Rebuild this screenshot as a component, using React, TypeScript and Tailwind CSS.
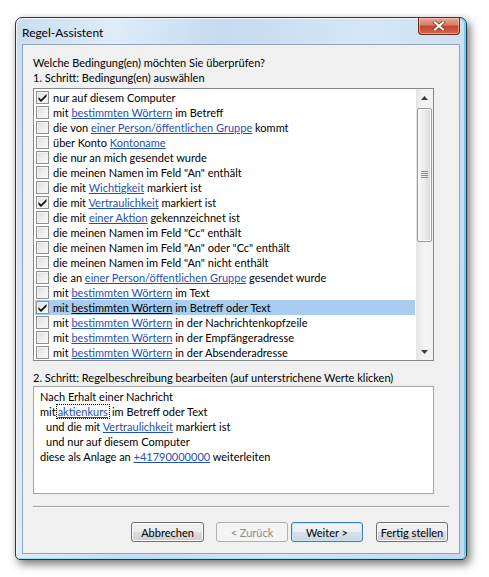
import React from 'react';

type Part = { t: string; link?: boolean };

interface Row {
  parts: Part[];
  checked?: boolean;
  selected?: boolean;
}

const L = (t: string): Part => ({ t, link: true });
const T = (t: string): Part => ({ t });

const rows: Row[] = [
  { parts: [T('nur auf diesem Computer')], checked: true },
  { parts: [T('mit '), L('bestimmten Wörtern'), T(' im Betreff')] },
  { parts: [T('die von '), L('einer Person/öffentlichen Gruppe'), T(' kommt')] },
  { parts: [T('über Konto '), L('Kontoname')] },
  { parts: [T('die nur an mich gesendet wurde')] },
  { parts: [T('die meinen Namen im Feld "An" enthält')] },
  { parts: [T('die mit '), L('Wichtigkeit'), T(' markiert ist')] },
  { parts: [T('die mit '), L('Vertraulichkeit'), T(' markiert ist')], checked: true },
  { parts: [T('die mit '), L('einer Aktion'), T(' gekennzeichnet ist')] },
  { parts: [T('die meinen Namen im Feld "Cc" enthält')] },
  { parts: [T('die meinen Namen im Feld "An" oder "Cc" enthält')] },
  { parts: [T('die meinen Namen im Feld "An" nicht enthält')] },
  { parts: [T('die an '), L('einer Person/öffentlichen Gruppe'), T(' gesendet wurde')] },
  { parts: [T('mit '), L('bestimmten Wörtern'), T(' im Text')] },
  { parts: [T('mit '), L('bestimmten Wörtern'), T(' im Betreff oder Text')], checked: true, selected: true },
  { parts: [T('mit '), L('bestimmten Wörtern'), T(' in der Nachrichtenkopfzeile')] },
  { parts: [T('mit '), L('bestimmten Wörtern'), T(' in der Empfängeradresse')] },
  { parts: [T('mit '), L('bestimmten Wörtern'), T(' in der Absenderadresse')] },
];

const CheckBox: React.FC<{ checked?: boolean }> = ({ checked }) => (
  <span className="w-[13px] h-[13px] shrink-0 border border-[#8e8f8f] bg-[linear-gradient(135deg,#dedede,#fbfbfb)] shadow-[inset_0_0_0_1px_#f4f4f4] flex items-center justify-center">
    {checked && (
      <svg width="11" height="11" viewBox="0 0 11 11">
        <polygon points="1.5,5 4,7.5 9.5,2 9.5,4.5 4,10 1.5,7.5" fill="#111" />
      </svg>
    )}
  </span>
);

const ListRow: React.FC<{ row: Row }> = ({ row }) => (
  <div
    className={`h-[15px] mx-[1px] pl-[1px] flex items-center gap-[4px] whitespace-nowrap ${
      row.selected ? 'bg-[#a9cdf1]' : ''
    }`}
  >
    <CheckBox checked={row.checked} />
    <span>
      {row.parts.map((p, i) =>
        p.link ? (
          <span key={i} className={`underline ${row.selected ? 'text-black' : 'text-[#1f4fb5]'}`}>
            {p.t}
          </span>
        ) : (
          <span key={i}>{p.t}</span>
        )
      )}
    </span>
  </div>
);

const ScrollBar: React.FC = () => (
  <div className="w-[17px] shrink-0 flex flex-col bg-[linear-gradient(90deg,#e4e4e4,#f4f4f4_45%,#f2f2f2)]">
    <div className="h-[17px] flex items-center justify-center">
      <svg width="7" height="4" viewBox="0 0 7 4">
        <polygon points="0,4 3.5,0 7,4" fill="#3c3c3c" />
      </svg>
    </div>
    <div className="mt-[2px] mx-[1px] h-[134px] rounded-[2px] border border-[#9b9b9b] bg-[linear-gradient(90deg,#f6f6f6,#ececec_50%,#d8d8d8)] shadow-[inset_0_0_0_1px_#fafafa] flex items-center justify-center">
      <svg width="7" height="8" viewBox="0 0 7 8">
        <rect x="0" y="0" width="7" height="1" fill="#8a8a8a" />
        <rect x="0" y="2" width="7" height="1" fill="#8a8a8a" />
        <rect x="0" y="4" width="7" height="1" fill="#8a8a8a" />
        <rect x="0" y="6" width="7" height="1" fill="#8a8a8a" />
      </svg>
    </div>
    <div className="flex-1" />
    <div className="h-[17px] flex items-center justify-center">
      <svg width="7" height="4" viewBox="0 0 7 4">
        <polygon points="0,0 7,0 3.5,4" fill="#3c3c3c" />
      </svg>
    </div>
  </div>
);

const WizardButton: React.FC<{ label: string; width: string; kind?: 'default' | 'disabled' }> = ({
  label,
  width,
  kind,
}) => {
  const base = 'h-[20px] rounded-[3px] border flex items-center justify-center';
  const look =
    kind === 'disabled'
      ? 'border-[#adb2b5] bg-[#f4f4f4] text-[#8a8a8a]'
      : kind === 'default'
      ? 'border-[#3c7fb1] bg-[linear-gradient(#f2f6f9,#e9eef2_50%,#d9e2ea_50%,#cdd6de)] shadow-[inset_0_0_0_1px_#c4e5f6] text-black'
      : 'border-[#707070] bg-[linear-gradient(#f2f2f2,#ebebeb_50%,#dddddd_50%,#cfcfcf)] shadow-[inset_0_0_0_1px_#fbfbfb] text-black';
  return <button className={`${base} ${look} ${width}`}>{label}</button>;
};

const Link: React.FC<{ children: React.ReactNode }> = ({ children }) => (
  <span className="text-[#1f4fb5] underline">{children}</span>
);

export default function App() {
  return (
    <div className="w-[489px] h-[577px] bg-white pt-[17px] pl-[15px] font-['Lato',sans-serif] text-[11px] leading-[15px] text-black">
      <div className="w-[452px] rounded-t-[7px] rounded-b-[5px] border border-[#2c3642] bg-[linear-gradient(100deg,#c9dcef_0%,#dfecf8_18%,#c6dbef_38%,#d6e6f5_65%,#c3d9ee_100%)] shadow-[3px_4px_10px_rgba(0,0,0,0.55),inset_-2px_0_0_#6fd0f6,inset_0_-1px_0_#9fdcf5,inset_1px_1px_0_#eef5fb] flex flex-col">
        {/* title bar */}
        <div className="h-[26px] flex items-start justify-between">
          <span className="pl-[6px] pt-[7px] text-[12px]">Regel-Assistent</span>
          <div className="mr-[6px] w-[42px] h-[17px] rounded-b-[4px] border border-t-0 border-[#6b2a20] bg-[linear-gradient(#e9a99b,#d67a66_45%,#c3452f_50%,#d4664c)] shadow-[inset_0_0_0_1px_rgba(255,220,210,0.5)] flex items-center justify-center">
            <svg width="14" height="10" viewBox="0 0 14 10">
              <path d="M3 1.5 L11 8.5 M11 1.5 L3 8.5" stroke="#7a2a1e" strokeWidth="3.6" strokeLinecap="square" />
              <path d="M3 1.5 L11 8.5 M11 1.5 L3 8.5" stroke="#ffffff" strokeWidth="2.2" strokeLinecap="square" />
            </svg>
          </div>
        </div>

        {/* client area */}
        <div className="mx-[6px] mb-[5px] border border-[#8ea5bd] bg-[#f0f0f0] flex flex-col pl-[10px] pt-[10px] pb-[11px]">
          <p>Welche Bedingung(en) möchten Sie überprüfen?</p>
          <p>1. Schritt: Bedingung(en) auswählen</p>

          <div className="mt-[3px] w-[401px] h-[273px] border border-[#828790] bg-white flex">
            <div className="flex-1 overflow-hidden pt-[1px]">
              {rows.map((r, i) => (
                <ListRow key={i} row={r} />
              ))}
            </div>
            <ScrollBar />
          </div>

          <p className="mt-[9px]">2. Schritt: Regelbeschreibung bearbeiten (auf unterstrichene Werte klicken)</p>

          <div className="mt-[1px] w-[401px] h-[108px] border border-[#a5a5a5] bg-white pl-[6px] pt-[2px] whitespace-nowrap">
            <p>Nach Erhalt einer Nachricht</p>
            <p>
              mit
              <span className="border border-dotted border-black px-[1px] mr-[2px]">
                <Link>aktienkurs</Link>
              </span>
              im Betreff oder Text
            </p>
            <p className="pl-[6px]">
              und die mit <Link>Vertraulichkeit</Link> markiert ist
            </p>
            <p className="pl-[6px]">und nur auf diesem Computer</p>
            <p>
              diese als Anlage an <Link>+41790000000</Link> weiterleiten
            </p>
          </div>

          <div className="mt-[12px] mr-[10px] border-t border-[#a0a0a0] border-b border-b-white" />

          <div className="mt-[14px] pr-[11px] flex justify-end">
            <WizardButton label="Abbrechen" width="w-[73px]" />
            <div className="w-[12px]" />
            <WizardButton label="< Zurück" width="w-[72px]" kind="disabled" />
            <div className="w-[3px]" />
            <WizardButton label="Weiter >" width="w-[72px]" kind="default" />
            <div className="w-[13px]" />
            <WizardButton label="Fertig stellen" width="w-[72px]" />
          </div>
        </div>
      </div>
    </div>
  );
}
